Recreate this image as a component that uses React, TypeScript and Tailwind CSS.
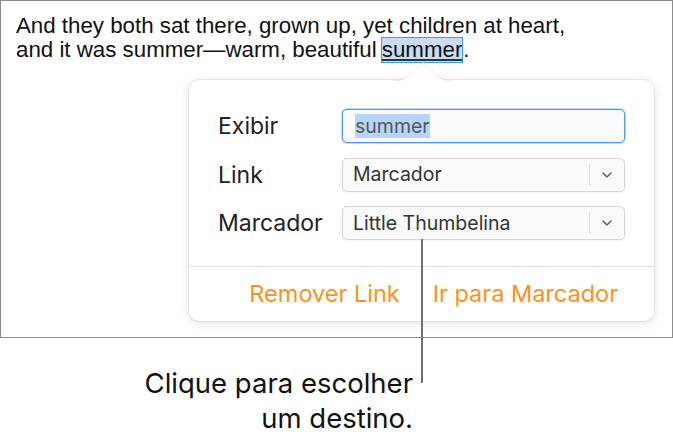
import React from 'react'

function Chevron() {
  return (
    <svg width="12" height="8" viewBox="0 0 12 8" className="text-[#555]">
      <path d="M2 2 L6 6 L10 2" fill="none" stroke="currentColor" strokeWidth="1.4" strokeLinecap="round" strokeLinejoin="round" />
    </svg>
  )
}

function Select({ value }: { value: string }) {
  return (
    <div className="flex h-[34px] w-[283px] items-center rounded-[5px] border border-[#d6d6d6] bg-[#fafafa] shadow-[0_1px_1px_rgba(0,0,0,0.05)]">
      <span className="flex-1 pl-[10px] text-[19.5px] text-[#333]">{value}</span>
      <div className="h-[22px] w-px bg-[#dcdcdc]" />
      <div className="flex w-[34px] items-center justify-center">
        <Chevron />
      </div>
    </div>
  )
}

export default function App() {
  return (
    <div className="relative h-[443px] w-[673px] bg-white font-['Inter','Liberation_Sans',sans-serif]">
      {/* Document frame */}
      <div className="relative h-[338px] w-[673px] border border-[#8c8c8c]">
        <p className="pl-[15px] pt-[13px] font-['Liberation_Sans',Arial,sans-serif] text-[22.3px] leading-[23px] text-[#111]">
          And they both sat there, grown up, yet children at heart,
          <br />
          and it was summer—warm, beautiful{' '}
          <span className="-ml-[2px] inline-block h-[26px] border border-[#3d9bf7] bg-[#c9dcf4] leading-[24px] underline decoration-[#333] underline-offset-2">summer</span>.
        </p>

        {/* Popover */}
        <div className="absolute left-[188px] top-[79px] h-[241px] w-[465px] rounded-[10px] bg-white shadow-[0_0_0_1px_rgba(0,0,0,0.06),0_2px_12px_rgba(0,0,0,0.12)]">
          <svg width="60" height="20" viewBox="0 0 60 20" className="absolute left-[204px] top-[-18px]">
            <path d="M0 19 Q10 19 16 14 L30 0 L44 14 Q50 19 60 19" fill="white" stroke="rgba(0,0,0,0.08)" strokeWidth="1" />
            <rect x="0" y="19" width="60" height="2" fill="white" />
          </svg>

          <div className="flex flex-col gap-[14px] px-[29px] pt-[29px]">
            <div className="flex items-center justify-between">
              <span className="text-[23px] text-[#222]">Exibir</span>
              <div className="flex h-[34px] w-[283px] items-center rounded-[5px] border border-[#4a9bf5] bg-[#fafafa] pl-[12px] shadow-[0_0_0_1px_rgba(74,155,245,0.35)]">
                <span className="bg-[#b5d5fb] text-[19.5px] leading-[24px] text-[#555]">summer</span>
              </div>
            </div>
            <div className="flex items-center justify-between">
              <span className="text-[23px] text-[#222]">Link</span>
              <Select value="Marcador" />
            </div>
            <div className="flex items-center justify-between">
              <span className="text-[23px] text-[#222]">Marcador</span>
              <Select value="Little Thumbelina" />
            </div>
          </div>

          <div className="mt-[25px] border-t border-[#e3e3e3]" />
          <div className="flex h-[55px] items-center justify-end gap-[33px] pr-[36px] text-[23.5px] text-[#f7931e]">
            <span>Remover Link</span>
            <span>Ir para Marcador</span>
          </div>
        </div>
      </div>

      {/* Callout */}
      <div className="absolute left-[421px] top-[239px] h-[144px] w-[2px] bg-[#707070]" />
      <div className="w-[413px] pt-[28px] text-right text-[27.5px] leading-[35px] text-[#111]">
        Clique para escolher
        <br />
        um destino.
      </div>
    </div>
  )
}
